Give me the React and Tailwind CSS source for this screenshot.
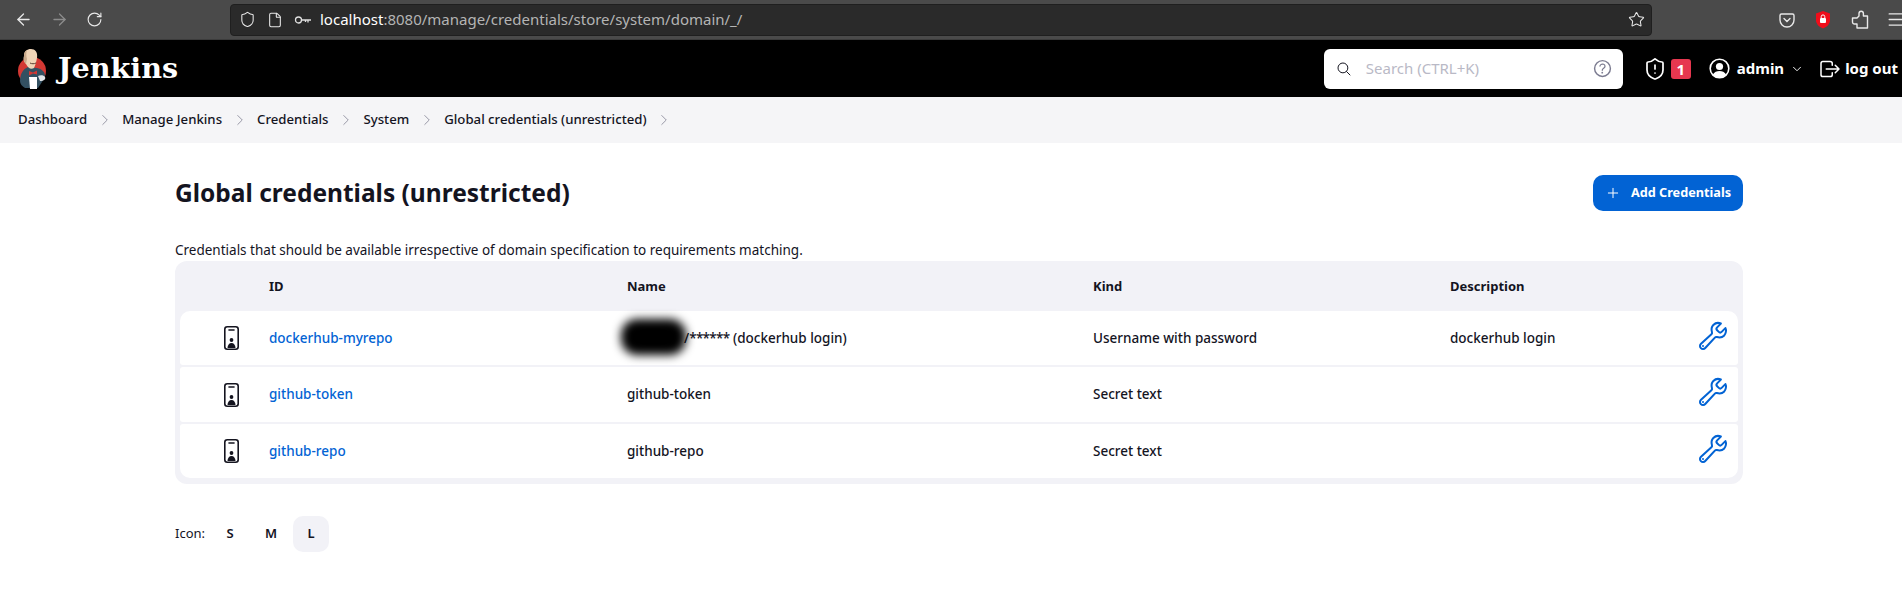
import { ArrowLeft, ArrowRight, RotateCw, Shield, File, Star, ShieldAlert, ChevronDown, ChevronRight, Plus, Menu } from 'lucide-react'
import { IoBuildOutline, IoSearchOutline, IoHelpCircleOutline, IoLogOutOutline } from 'react-icons/io5'

const crumbs = ['Dashboard', 'Manage Jenkins', 'Credentials', 'System', 'Global credentials (unrestricted)']

const rows = [
  { id: 'dockerhub-myrepo', kind: 'Username with password', description: 'dockerhub login', height: 'h-[54px]', rounded: 'rounded-t-[10px] rounded-b-[3px]' },
  { id: 'github-token', name: 'github-token', kind: 'Secret text', height: 'h-[55px]', rounded: 'rounded-[3px]' },
  { id: 'github-repo', name: 'github-repo', kind: 'Secret text', height: 'h-[54px]', rounded: 'rounded-t-[3px] rounded-b-[10px]' },
]

function JenkinsLogo() {
  return (
    <svg width="30" height="42" viewBox="0 0 30 42">
      <circle cx="15" cy="23" r="14" fill="#d33833" />
      <path d="M3 33c0-7 3-12 8-14l9 1c5 1 8 4 8 8l-3 6-4 6H8c-3-2-5-4-5-7z" fill="#335061" />
      <path d="M7 8c0-5 3-7 7-7s7 3 6 9c-1 5-2 8-3 10-3 2-6 0-8-4-1-1-3-3-2-8z" fill="#efd4b6" />
      <path d="M7 8c0-3 1-5 3-6-1 3-1 6 0 9l-1 5C7 14 6 11 7 8z" fill="#c9a98a" />
      <path d="M13 15c2 1 4 1 6 0" fill="none" stroke="#5a3d2e" strokeWidth="1" />
      <path d="M12 23l4 1.500 4-2v4l-4-1-4 2z" fill="#d33833" />
      <path d="M12 29h8v12h-7z" fill="#fff" />
      <path d="M21 28c2-1 6-1 7 1s-1 4-5 4z" fill="#dfe4e8" />
    </svg>
  )
}

function DeviceIcon() {
  return (
    <svg width="15" height="24" viewBox="0 0 15 24" fill="none" stroke="#14141f" strokeWidth="1.6">
      <rect x="0.800" y="0.800" width="13.400" height="22.400" rx="2.500" />
      <path d="M5 4h5" strokeLinecap="round" />
      <circle cx="7.500" cy="14" r="1.900" fill="#14141f" stroke="none" />
      <path d="M3.500 22c0-3 1.700-5 4-5s4 2 4 5z" fill="#14141f" stroke="none" />
    </svg>
  )
}

function KeyIcon() {
  return (
    <svg width="18" height="12" viewBox="0 0 18 12" fill="none" stroke="#e0e0e0" strokeWidth="1.3">
      <circle cx="4.500" cy="6" r="3" />
      <path d="M7.500 6H17M14 6v2.500M11.500 6v2" />
    </svg>
  )
}

function UserIcon() {
  return (
    <svg width="21" height="21" viewBox="0 0 21 21">
      <circle cx="10.500" cy="10.500" r="9.300" fill="none" stroke="#fff" strokeWidth="1.600" />
      <circle cx="10.500" cy="8.500" r="3.600" fill="#fff" />
      <path d="M3.800 16.500c1.500-2.500 4-3.500 6.700-3.500s5.200 1 6.700 3.500c-1.700 2-4 3.200-6.700 3.200s-5-1.200-6.700-3.200z" fill="#fff" />
    </svg>
  )
}

function PocketIcon() {
  return (
    <svg width="16" height="16" viewBox="0 0 16 16" fill="none" stroke="#e8e8e8" strokeWidth="1.400">
      <path d="M2.500 2h11A1.500 1.500 0 0 1 15 3.500V8A7 7 0 0 1 1 8V3.500A1.500 1.500 0 0 1 2.500 2z" />
      <path d="M5 6.500L8 9.500l3-3" strokeLinecap="round" />
    </svg>
  )
}

function LockShield() {
  return (
    <svg width="16" height="19" viewBox="0 0 16 19">
      <path d="M8 1l7 2.500V10c0 4-3 7-7 8.500C4 17 1 14 1 10V3.500z" fill="#f00d1a" />
      <rect x="5" y="8" width="6" height="5" rx="1" fill="#fff" />
      <path d="M6.200 8V6.700a1.800 1.800 0 0 1 3.600 0V8" fill="none" stroke="#fff" strokeWidth="1" />
    </svg>
  )
}

function ExtensionIcon() {
  return (
    <svg width="18" height="19" viewBox="0 0 18 19" fill="none" stroke="#e8e8e8" strokeWidth="1.400" strokeLinejoin="round" className="shrink-0">
      <path d="M8 6V3.500a2.200 2.200 0 0 1 4.400 0V6h4.100v12H6v-4H3.500a2 2 0 0 1-2-2V8H6z" />
    </svg>
  )
}

function BrowserBar() {
  return (
    <div className="h-10 shrink-0 bg-[#4a4a4a] border-b border-[#3c3c3c] flex items-center text-[#e8e8e8]">
      <div className="w-[230px] shrink-0 flex items-center pl-[14px] gap-[17px]">
        <ArrowLeft size={19} strokeWidth={1.6} />
        <ArrowRight size={19} strokeWidth={1.6} className="text-[#8c8c8c]" />
        <RotateCw size={17} strokeWidth={1.6} />
      </div>
      <div className="w-[1422px] shrink-0 h-8 bg-[#2a2a2a] border border-[#1f1f1f] rounded-[4px] flex items-center pl-[8px] pr-[6px]">
        <Shield size={17} strokeWidth={1.5} />
        <File size={16} strokeWidth={1.6} className="ml-[11px]" />
        <span className="ml-[11px]"><KeyIcon /></span>
        <span className="ml-[8px] text-[15px] text-white">localhost<span className="text-[#b4b4b4]">:8080/manage/credentials/store/system/domain/_/</span></span>
        <Star size={17} strokeWidth={1.5} className="ml-auto" />
      </div>
      <div className="flex items-center pl-[127px] gap-[20px]">
        <PocketIcon />
        <LockShield />
        <ExtensionIcon />
        <Menu size={19} strokeWidth={1.6} className="shrink-0 -ml-[3px]" />
      </div>
    </div>
  )
}

function Header() {
  return (
    <header className="h-[57px] shrink-0 bg-black flex items-center text-white">
      <div className="pl-[17px] flex items-center gap-[11px]">
        <JenkinsLogo />
        <span className="font-['DejaVu_Serif',serif] font-bold text-[28.600px] leading-none">Jenkins</span>
      </div>
      <div className="ml-auto w-[299px] h-10 bg-white rounded-[6px] flex items-center pl-3 pr-[9px]">
        <IoSearchOutline size={16} className="text-[#14141f]" />
        <span className="ml-[14px] text-[#b9b9c6] text-[15px]">Search (CTRL+K)</span>
        <IoHelpCircleOutline size={23} className="ml-auto text-[#7b7b90]" />
      </div>
      <div className="ml-[20px] flex items-center mr-[4px]">
        <ShieldAlert size={24} strokeWidth={1.7} />
        <span className="ml-[4px] w-5 h-5 rounded-[3px] bg-[#e6374f] text-[15px] font-bold leading-5 text-center">1</span>
        <span className="ml-[18px]"><UserIcon /></span>
        <span className="ml-[7px] text-[15px] font-bold">admin</span>
        <ChevronDown size={14} strokeWidth={1.6} className="ml-[6px]" />
        <IoLogOutOutline size={24} className="ml-[14px]" />
        <span className="ml-[3px] text-[15px] font-bold whitespace-nowrap">log out</span>
      </div>
    </header>
  )
}

function Breadcrumbs() {
  return (
    <nav className="h-[46px] shrink-0 bg-[#f5f5f7] flex items-center pl-[18px] text-[13.200px] font-medium text-[#14141f]">
      {crumbs.map(crumb => (
        <div key={crumb} className="flex items-center">
          <span>{crumb}</span>
          <ChevronRight size={18} strokeWidth={1.2} className="mx-[8.500px] text-[#8e8e9e]" />
        </div>
      ))}
    </nav>
  )
}

function CredentialRow({ row }) {
  return (
    <div className={`grid grid-cols-[89px_358px_466px_357px_1fr] items-center bg-white ${row.height} ${row.rounded} text-[13.500px] font-medium text-[#14141f]`}>
      <div className="flex justify-center pl-[13px]"><DeviceIcon /></div>
      <a href="#" className="text-[#0263d4]">{row.id}</a>
      {row.name ? (
        <div>{row.name}</div>
      ) : (
        <div className="relative">
          <span className="absolute left-[-6px] top-[-9px] w-[65px] h-[36px] rounded-[16px] bg-black blur-[5px]"></span>
          <span className="inline-block w-[57px]"></span>/<span className="tracking-[-0.7px]">******</span> (dockerhub login)
        </div>
      )}
      <div>{row.kind}</div>
      <div className="flex items-center justify-between pr-[9px]">
        <span>{row.description}</span>
        <IoBuildOutline size={32} className="text-[#0263d4] ml-auto mb-[5px]" />
      </div>
    </div>
  )
}

export default function App() {
  return (
    <div className="h-screen overflow-hidden flex flex-col bg-white font-['Noto_Sans',sans-serif] text-[#14141f]">
      <BrowserBar />
      <Header />
      <Breadcrumbs />
      <main className="pl-[175px] pr-[159px]">
        <div className="mt-8 h-9 flex items-center justify-between">
          <h1 className="text-[24.500px] font-bold">Global credentials (unrestricted)</h1>
          <button className="w-[150px] h-9 rounded-[10px] bg-[#0263d4] text-white text-[12.700px] font-bold flex items-center justify-center gap-[10px]">
            <Plus size={16} strokeWidth={1.5} />
            Add Credentials
          </button>
        </div>
        <p className="mt-[29px] h-5 text-[13.500px] leading-5">Credentials that should be available irrespective of domain specification to requirements matching.</p>
        <div className="mt-px rounded-[12px] bg-[#f2f2f7] px-[5px] pb-[6px]">
          <div className="h-[50px] pt-px grid grid-cols-[89px_358px_466px_357px_1fr] items-center text-[13px] font-bold">
            <div></div>
            <div>ID</div>
            <div>Name</div>
            <div>Kind</div>
            <div>Description</div>
          </div>
          <div className="flex flex-col gap-[2px]">
            {rows.map(row => <CredentialRow key={row.id} row={row} />)}
          </div>
        </div>
        <div className="mt-8 flex items-center text-[13px]">
          <span className="w-[37px]">Icon:</span>
          <button className="w-9 h-9 rounded-[10px] font-semibold">S</button>
          <button className="ml-[5px] w-9 h-9 rounded-[10px] font-semibold">M</button>
          <button className="ml-[4px] w-9 h-9 rounded-[10px] bg-[#f2f2f7] font-semibold">L</button>
        </div>
      </main>
    </div>
  )
}
